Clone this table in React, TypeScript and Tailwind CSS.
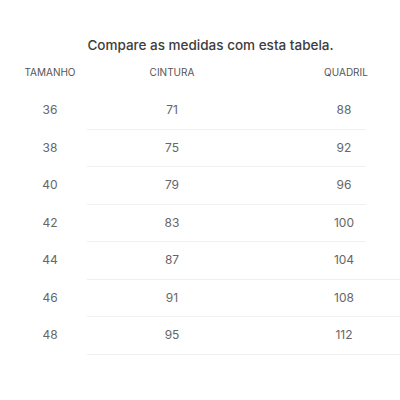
import React from "react";

const rows = [
  ["36", "71", "88"],
  ["38", "75", "92"],
  ["40", "79", "96"],
  ["42", "83", "100"],
  ["44", "87", "104"],
  ["46", "91", "108"],
  ["48", "95", "112"],
];

export default function App() {
  return (
    <div
      className="w-[400px] h-[400px] bg-white overflow-hidden"
      style={{ fontFamily: "Inter, 'Open Sans', sans-serif" }}
    >
      <div className="pt-[35px] pl-[21px] h-[55px] text-center text-[13.5px] leading-[20px] font-medium text-[#3d3d3d]">
        Compare as medidas com esta tabela.
      </div>
      <div className="flex mt-[9.5px] h-[14px] text-[10px] leading-[14px] text-[#555]">
        <div className="w-[100px] text-center">TAMANHO</div>
        <div className="w-[144px] text-center">CINTURA</div>
        <div className="ml-[56px] w-[92px] text-center">QUADRIL</div>
      </div>
      <div className="mt-[13.5px]">
        {rows.map((r, i) => (
          <div key={i}>
            <div className="flex items-center h-[36.5px] text-[12px] text-[#666]">
              <div className="w-[100px] text-center">{r[0]}</div>
              <div className="w-[144px] text-center">{r[1]}</div>
              <div className="ml-[54px] w-[92px] text-center">{r[2]}</div>
            </div>
            <div
              className={
                i < 4
                  ? "ml-[87px] w-[279px] h-px bg-[#f0f0f0]"
                  : "ml-[87px] w-[313px] h-px bg-[#f0f0f0]"
              }
            />
          </div>
        ))}
      </div>
    </div>
  );
}
